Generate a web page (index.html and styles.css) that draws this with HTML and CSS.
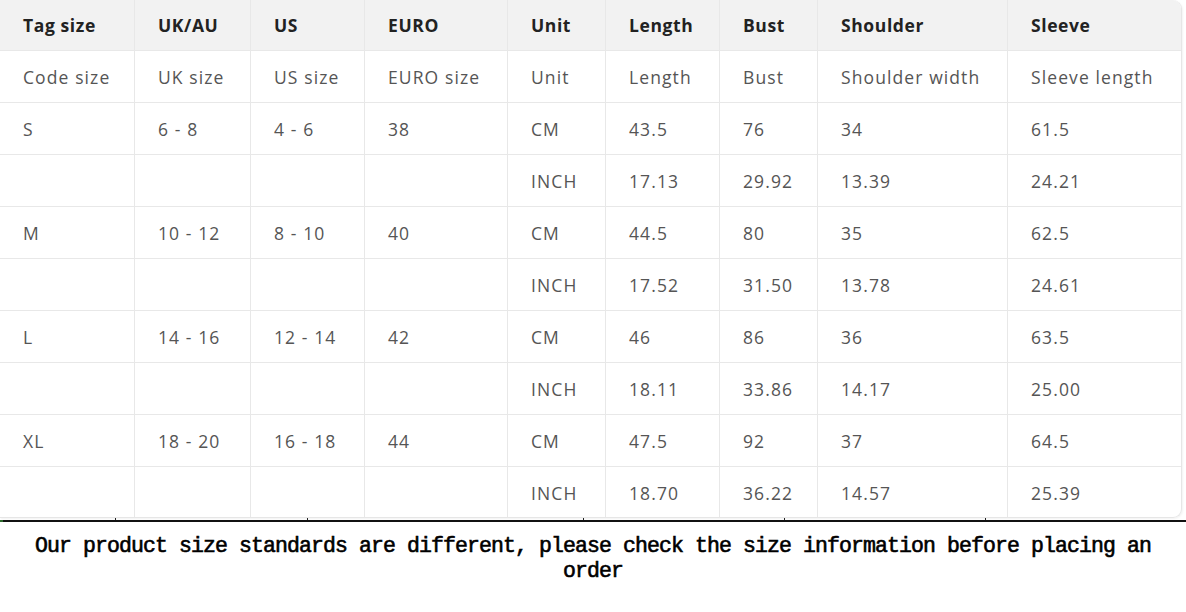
FILE: index.html
```html
<!DOCTYPE html>
<html lang="en">
<head>
<meta charset="utf-8">
<title>Size chart</title>
<link rel="stylesheet" href="styles.css">
</head>
<body>
<div class="chart">
  <div class="grid">
    <div class="cell head">Tag size</div>
    <div class="cell head">UK/AU</div>
    <div class="cell head">US</div>
    <div class="cell head">EURO</div>
    <div class="cell head">Unit</div>
    <div class="cell head">Length</div>
    <div class="cell head">Bust</div>
    <div class="cell head">Shoulder</div>
    <div class="cell head last">Sleeve</div>

    <div class="cell">Code size</div>
    <div class="cell">UK size</div>
    <div class="cell">US size</div>
    <div class="cell">EURO size</div>
    <div class="cell">Unit</div>
    <div class="cell">Length</div>
    <div class="cell">Bust</div>
    <div class="cell">Shoulder width</div>
    <div class="cell last">Sleeve length</div>

    <div class="cell">S</div>
    <div class="cell">6 - 8</div>
    <div class="cell">4 - 6</div>
    <div class="cell">38</div>
    <div class="cell">CM</div>
    <div class="cell">43.5</div>
    <div class="cell">76</div>
    <div class="cell">34</div>
    <div class="cell last">61.5</div>

    <div class="cell"></div>
    <div class="cell"></div>
    <div class="cell"></div>
    <div class="cell"></div>
    <div class="cell">INCH</div>
    <div class="cell">17.13</div>
    <div class="cell">29.92</div>
    <div class="cell">13.39</div>
    <div class="cell last">24.21</div>

    <div class="cell">M</div>
    <div class="cell">10 - 12</div>
    <div class="cell">8 - 10</div>
    <div class="cell">40</div>
    <div class="cell">CM</div>
    <div class="cell">44.5</div>
    <div class="cell">80</div>
    <div class="cell">35</div>
    <div class="cell last">62.5</div>

    <div class="cell"></div>
    <div class="cell"></div>
    <div class="cell"></div>
    <div class="cell"></div>
    <div class="cell">INCH</div>
    <div class="cell">17.52</div>
    <div class="cell">31.50</div>
    <div class="cell">13.78</div>
    <div class="cell last">24.61</div>

    <div class="cell">L</div>
    <div class="cell">14 - 16</div>
    <div class="cell">12 - 14</div>
    <div class="cell">42</div>
    <div class="cell">CM</div>
    <div class="cell">46</div>
    <div class="cell">86</div>
    <div class="cell">36</div>
    <div class="cell last">63.5</div>

    <div class="cell"></div>
    <div class="cell"></div>
    <div class="cell"></div>
    <div class="cell"></div>
    <div class="cell">INCH</div>
    <div class="cell">18.11</div>
    <div class="cell">33.86</div>
    <div class="cell">14.17</div>
    <div class="cell last">25.00</div>

    <div class="cell">XL</div>
    <div class="cell">18 - 20</div>
    <div class="cell">16 - 18</div>
    <div class="cell">44</div>
    <div class="cell">CM</div>
    <div class="cell">47.5</div>
    <div class="cell">92</div>
    <div class="cell">37</div>
    <div class="cell last">64.5</div>

    <div class="cell bottom"></div>
    <div class="cell bottom"></div>
    <div class="cell bottom"></div>
    <div class="cell bottom"></div>
    <div class="cell bottom">INCH</div>
    <div class="cell bottom">18.70</div>
    <div class="cell bottom">36.22</div>
    <div class="cell bottom">14.57</div>
    <div class="cell bottom last">25.39</div>
  </div>
</div>
<div class="rule"></div>
<p class="note">Our product size standards are different, please check the size information before placing an order</p>
</body>
</html>
```

FILE: styles.css
```css
html, body {
  margin: 0;
  padding: 0;
  background: #ffffff;
}

body {
  width: 1186px;
  height: 612px;
  overflow: hidden;
}

.chart {
  width: 1182px;
  height: 518px;
  box-sizing: border-box;
  border-right: 1px solid #e6e6e6;
  border-bottom: 1px solid #e6e6e6;
  border-radius: 0 9px 9px 0;
  overflow: hidden;
  box-shadow: 1px 1px 2px rgba(0, 0, 0, 0.05);
}

.grid {
  display: grid;
  grid-template-columns: 135px 116px 114px 143px 98px 114px 98px 190px 173px;
  grid-template-rows: 51px repeat(9, 52px);
  font-family: "Open Sans", "Noto Sans", sans-serif;
}

.cell {
  display: flex;
  align-items: center;
  padding-left: 23px;
  border-right: 1px solid #e8e8e8;
  border-bottom: 1px solid #e8e8e8;
  font-size: 17.5px;
  letter-spacing: 1.1px;
  color: #555555;
  white-space: nowrap;
  overflow: hidden;
}

.cell.last {
  border-right: none;
}

.cell.bottom {
  border-bottom: none;
}

.cell.head {
  background: #f2f2f2;
  color: #222222;
  font-weight: 700;
  letter-spacing: 0.6px;
  padding-bottom: 1px;
}

.rule {
  height: 4px;
  background:
    linear-gradient(#222, #222) 115px 0 / 1px 2px no-repeat,
    linear-gradient(#222, #222) 307px 0 / 1px 2px no-repeat,
    linear-gradient(#222, #222) 583px 0 / 1px 2px no-repeat,
    linear-gradient(#222, #222) 784px 0 / 1px 2px no-repeat,
    linear-gradient(#222, #222) 985px 0 / 1px 2px no-repeat,
    linear-gradient(#2d6b2d, #2d6b2d) 0 2px / 3px 2px no-repeat,
    linear-gradient(#111, #111) 0 2px / 100% 2px no-repeat;
}

.note {
  margin: 12px 0 0;
  padding: 0 24px;
  text-align: center;
  font-family: "Liberation Mono", "DejaVu Sans Mono", monospace;
  font-weight: 400;
  -webkit-text-stroke: 0.6px #000;
  font-size: 21.5px;
  letter-spacing: -0.9px;
  line-height: 25px;
  color: #000000;
}
```
